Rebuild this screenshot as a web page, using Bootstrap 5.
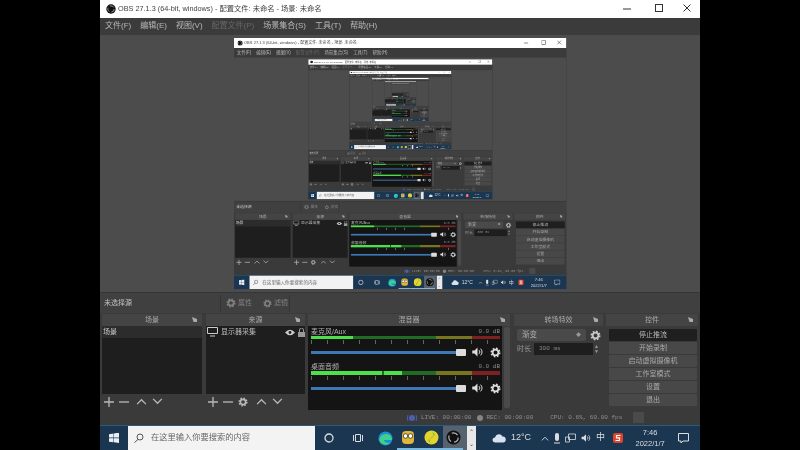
<!DOCTYPE html>
<html lang="zh-CN">
<head>
    <meta charset="UTF-8">
    <meta name="viewport" content="width=device-width, initial-scale=1.0">
    <title>OBS 27.1.3</title>
    <link rel="stylesheet" href="https://cdn.jsdelivr.net/npm/bootstrap@5.3.0/dist/css/bootstrap.min.css">
    <style>
        html, body { height: 450px; overflow: hidden; background: #000; }
        body { font-family: "Liberation Sans", "Noto Sans CJK SC", sans-serif; font-size: 7px; color: #c0c0c0; }
        svg { display: block; flex: none; }
        span { white-space: nowrap; }

        .obs-screen { width: 600px; height: 450px; background: #3a3a3a; filter: blur(.55px); overflow: hidden; }
        .obs-screen .obs-screen { filter: blur(.9px); }

        .win-title { height: 18px; background: #fff; color: #444; font-size: 7.3px; padding-left: 6px; }
        .win-title > svg { margin-right: 2px; }
        .win-btn { width: 32px; display: flex; justify-content: center; }
        .win-btn:last-child { width: 25px; }
        .win-menu { height: 17px; background: #3b3b3b; padding-left: 5px; gap: 9px; font-size: 8px; color: #b8b8b8; }
        .menu-off { color: #666; }

        .obs-canvas { height: 258px; background: #4c4c4c; position: relative; }
        .nest-slot { position: absolute; left: 134px; top: 3px; width: 600px; height: 450px; transform: scale(.554, .558); transform-origin: 0 0; }

        .sel-bar { height: 21px; background: #404040; border-top: 1px solid #353535; }
        .sel-label { width: 120px; padding-left: 4px; }
        .sel-tools { color: #808080; height: 17px; border-left: 1px solid #353535; border-right: 1px solid #353535; padding-left: 5px; width: 70px; gap: 1px; }
        .sel-tools span { margin-right: 10px; margin-left: 1px; }

        .dock-row { height: 96px; padding-left: 2px; margin-top: 1px; }
        .dock-scene { width: 100px; margin-right: 4px; }
        .dock-source { width: 99px; margin-right: 3px; }
        .dock-mixer { width: 202px; margin-right: 4px; }
        .dock-trans { width: 89px; margin-right: 3px; }
        .dock-ctrl { width: 92px; }
        .dock-head { height: 12px; background: #444; color: #aaa; text-align: center; position: relative; line-height: 12px; }
        .dock-head::after { content: ""; position: absolute; right: 5px; top: 3px; width: 5px; height: 5px; background: #aaa; clip-path: polygon(0 0, 100% 40%, 100% 100%, 30% 100%); }
        .dock-list { height: 68px; background: #1e1e1e; }
        .list-sel { height: 12px; line-height: 12px; background: #2c2c2c; padding-left: 1px; color: #ccc; }
        .source-row { height: 12px; padding-left: 1px; color: #bbb; gap: 3px; }
        .source-row span { width: 65px; }
        .dock-tools { height: 15px; background: #3a3a3a; padding-left: 2px; color: #b8b8b8; gap: 5px; }
        .tool-up { margin-left: 2px; }
        .source-up { margin-left: 3px; }

        .mixer-body { height: 84px; }
        .mixer-tracks { width: 194px; background: #141414; padding-left: 3px; }
        .mix-track { height: 35px; padding-top: 1px; }
        .mix-label { height: 9px; line-height: 9px; color: #b0b0b0; width: 189px; }
        .mix-db { font-family: "Liberation Mono", monospace; font-size: 6px; color: #8a8a8a; }
        .meter { height: 3px; width: 189px; position: relative; background: linear-gradient(90deg, #226b26 0 66%, #76761f 66% 85%, #7c2020 85%); }
        .meter-tall { height: 4px; }
        .meter-on { position: absolute; left: 0; top: 0; bottom: 0; background: #4ee04a; }
        .on-mic { width: 22%; }
        .on-desk { width: 48%; background: linear-gradient(90deg, #4ee04a 0 78%, #226b26 78% 80%, #4ee04a 80%); }
        .meter-ticks { height: 4px; width: 189px; margin-top: 1px; background: repeating-linear-gradient(90deg, #666 0 1px, transparent 1px 16px); }
        .mix-ctrl { height: 10px; margin-top: 3px; color: #ddd; width: 190px; }
        .fader { width: 155px; height: 3px; background: #3f77b5; position: relative; margin-right: 5px; }
        .fader::after { content: ""; position: absolute; right: 0; top: -2px; width: 10px; height: 7px; background: #dcdcdc; border-radius: 1px; }
        .mix-gear { margin-left: 6px; }
        .mix-scroll { width: 6px; height: 81px; background: #4a4a4a; border-radius: 2px; margin: 1px 0 0 2px; }

        .trans-body { padding: 3px 0 0 3px; height: 84px; color: #999; }
        .trans-select { width: 69px; height: 12px; background: #4a4a4a; color: #aaa; padding: 0 5px; border-radius: 2px; font-size: 7.5px; }
        .trans-gear { color: #c8c8c8; margin-left: 4px; }
        .trans-time { margin-top: 2px; }
        .trans-input { width: 59px; height: 12px; line-height: 12px; background: #1e1e1e; color: #8a8a8a; padding-left: 5px; margin: 0 1px 0 3px; font-family: "Liberation Mono", monospace; font-size: 6px; }
        .spin { color: #999; font-size: 5px; line-height: 5.5px; }

        .ctrl-body { padding: 3px 1px 0 3px; height: 84px; gap: 1px; }
        .ctrl-btn { height: 12px; line-height: 12px; padding: 0; border: 0; border-radius: 1px; font-size: 7px; background: #484848; color: #aaa; }
        .ctrl-btn.ctrl-on { background: #1f1f1f; color: #bbb; }

        .obs-status { height: 15px; background: #3a3a3a; padding-left: 307px; font-family: "Liberation Mono", monospace; font-size: 6px; color: #8f8f8f; }
        .status-dot { width: 6px; height: 6px; border-radius: 50%; background: #858585; margin: 0 3px 0 6px; }
        .status-rec { margin-right: 17px; }
        .status-live { margin-left: 4px; }
        .status-box { width: 11px; height: 11px; background: #4a4a4a; margin-left: 11px; }

        .win-taskbar { height: 25px; background: #1b3650; color: #ddd; border-top: 1px solid #2a5a7c; }
        .start-box { width: 28px; flex: none; }
        .search-box { width: 187px; flex: none; background: #f3f3f3; color: #666; font-size: 8.25px; padding-left: 6px; gap: 7px; }
        .task-icons { width: 161px; flex: none; }
        .task-cell { width: 24px; flex: none; }
        .task-cell:nth-child(1) { width: 28px; }
        .task-cell:nth-child(2) { width: 30px; }
        .task-cell:nth-child(4) { width: 22px; }
        .task-cell:nth-child(6) { width: 20px; }
        .task-active { background: #56626e; border-bottom: 2px solid #7ab8e0; }
        .task-under { border-bottom: 2px solid #7ab8e0; }
        .task-scroll { width: 13px; flex: none; background: linear-gradient(90deg, #56626e 0 4px, #e8e8e8 4px); color: #444; font-size: 6px; line-height: 12px; text-align: right; padding-right: 2px; }
        .tray { gap: 5px; padding-left: 16px; font-size: 9px; }
        .tray-temp { margin-right: 5px; }
        .tray-ime { margin-left: 3px; }
        .tray-clock { font-size: 7.5px; text-align: center; line-height: 11px; width: 34px; flex: none; margin-left: 5px; }
        .tray-note { margin-left: 6px; }
    </style>
</head>
<body class="d-flex justify-content-center">
    <svg width="0" height="0" class="position-absolute">
        <symbol id="i-gear" viewBox="0 0 16 16">
            <circle cx="8" cy="8" r="4.2" fill="none" stroke="currentColor" stroke-width="2.6"/>
            <circle cx="8" cy="8" r="6" fill="none" stroke="currentColor" stroke-width="2.6" stroke-dasharray="2.4 2.31"/>
        </symbol>
        <symbol id="i-speaker" viewBox="0 0 16 16">
            <path d="M1 6h3l4-4v12l-4-4H1z" fill="currentColor"/>
            <path d="M10 5.5a3.5 3.5 0 0 1 0 5M12 3.5a6 6 0 0 1 0 9" fill="none" stroke="currentColor" stroke-width="1.3"/>
        </symbol>
        <symbol id="i-up" viewBox="0 0 12 8"><path d="M1 7l5-5 5 5" fill="none" stroke="currentColor" stroke-width="1.5"/></symbol>
        <symbol id="i-down" viewBox="0 0 12 8"><path d="M1 1l5 5 5-5" fill="none" stroke="currentColor" stroke-width="1.5"/></symbol>
        <symbol id="i-plus" viewBox="0 0 10 10"><path d="M5 0v10M0 5h10" stroke="currentColor" stroke-width="1.3"/></symbol>
        <symbol id="i-minus" viewBox="0 0 10 10"><path d="M0 5h10" stroke="currentColor" stroke-width="1.3"/></symbol>
        <symbol id="i-obs" viewBox="0 0 16 16">
            <circle cx="8" cy="8" r="7.5" fill="#111"/>
            <circle cx="8" cy="8" r="5" fill="none" stroke="#bbb" stroke-width="1.2" stroke-dasharray="7 3.5"/>
        </symbol>
    </svg>

    <div class="obs-screen d-flex flex-column" id="screen">
        <div class="win-title d-flex align-items-center">
            <svg width="10" height="10"><use href="#i-obs"/></svg>
            <span class="flex-grow-1">OBS 27.1.3 (64-bit, windows) - 配置文件: 未命名 - 场景: 未命名</span>
            <div class="d-flex align-items-center">
                <div class="win-btn"><svg width="9" height="9"><path d="M0 5h8" stroke="#333"/></svg></div>
                <div class="win-btn"><svg width="9" height="9"><rect x=".5" y=".5" width="7" height="7" fill="none" stroke="#333"/></svg></div>
                <div class="win-btn"><svg width="9" height="9"><path d="M.5.5l7 7M7.5.5l-7 7" stroke="#333"/></svg></div>
            </div>
        </div>
        <div class="win-menu d-flex align-items-center">
            <span>文件(F)</span><span>编辑(E)</span><span>视图(V)</span><span class="menu-off">配置文件(P)</span><span>场景集合(S)</span><span>工具(T)</span><span>帮助(H)</span>
        </div>

        <div class="obs-canvas"><div class="nest-slot"></div></div>

        <div class="sel-bar d-flex align-items-center">
            <div class="sel-label"><span>未选择源</span></div>
            <div class="sel-tools d-flex align-items-center">
                <svg width="10" height="10"><use href="#i-gear"/></svg><span>属性</span>
                <svg width="9" height="9"><use href="#i-gear"/></svg><span>滤镜</span>
            </div>
        </div>

        <div class="dock-row d-flex">
            <div class="dock-scene">
                <div class="dock-head">场景</div>
                <div class="dock-list"><div class="list-sel">场景</div></div>
                <div class="dock-tools d-flex align-items-center">
                    <svg width="10" height="10"><use href="#i-plus"/></svg>
                    <svg width="10" height="10"><use href="#i-minus"/></svg>
                    <svg class="tool-up" width="11" height="7"><use href="#i-up"/></svg>
                    <svg width="11" height="7"><use href="#i-down"/></svg>
                </div>
            </div>
            <div class="dock-source">
                <div class="dock-head">来源</div>
                <div class="dock-list">
                    <div class="source-row d-flex align-items-center">
                        <svg width="11" height="10" viewBox="0 0 11 10"><path d="M.5.5h10v6H.5zM3 9h5" fill="none" stroke="#ccc"/></svg>
                        <span>显示器采集</span>
                        <svg width="10" height="7" viewBox="0 0 10 7"><path d="M0 3.5Q5-2 10 3.5 5 9 0 3.5z" fill="#ccc"/><circle cx="5" cy="3.5" r="1.4" fill="#1e1e1e"/></svg>
                        <svg width="7" height="9" viewBox="0 0 7 9"><path d="M0 4h7v5H0z" fill="#999"/><path d="M1.5 4V2a2 2 0 0 1 4 0v2" fill="none" stroke="#999"/></svg>
                    </div>
                </div>
                <div class="dock-tools d-flex align-items-center">
                    <svg width="10" height="10"><use href="#i-plus"/></svg>
                    <svg width="10" height="10"><use href="#i-minus"/></svg>
                    <svg width="10" height="10"><use href="#i-gear"/></svg>
                    <svg class="source-up" width="11" height="7"><use href="#i-up"/></svg>
                    <svg width="11" height="7"><use href="#i-down"/></svg>
                </div>
            </div>
            <div class="dock-mixer">
                <div class="dock-head">混音器</div>
                <div class="mixer-body d-flex">
                    <div class="mixer-tracks">
                        <div class="mix-track">
                            <div class="mix-label d-flex justify-content-between"><span>麦克风/Aux</span><span class="mix-db">0.0 dB</span></div>
                            <div class="meter"><div class="meter-on on-mic"></div></div>
                            <div class="meter-ticks"></div>
                            <div class="mix-ctrl d-flex align-items-center">
                                <div class="fader"></div>
                                <svg width="13" height="12"><use href="#i-speaker"/></svg>
                                <svg class="mix-gear" width="11" height="11"><use href="#i-gear"/></svg>
                            </div>
                        </div>
                        <div class="mix-track">
                            <div class="mix-label d-flex justify-content-between"><span>桌面音频</span><span class="mix-db">0.0 dB</span></div>
                            <div class="meter meter-tall"><div class="meter-on on-desk"></div></div>
                            <div class="meter-ticks"></div>
                            <div class="mix-ctrl d-flex align-items-center">
                                <div class="fader"></div>
                                <svg width="13" height="12"><use href="#i-speaker"/></svg>
                                <svg class="mix-gear" width="11" height="11"><use href="#i-gear"/></svg>
                            </div>
                        </div>
                    </div>
                    <div class="mix-scroll"></div>
                </div>
            </div>
            <div class="dock-trans">
                <div class="dock-head">转场特效</div>
                <div class="trans-body">
                    <div class="d-flex align-items-center">
                        <div class="trans-select d-flex align-items-center justify-content-between"><span>渐变</span><span class="spin">◆</span></div>
                        <svg class="trans-gear" width="11" height="11"><use href="#i-gear"/></svg>
                    </div>
                    <div class="trans-time d-flex align-items-center">
                        <span>时长</span>
                        <div class="trans-input">300 ms</div>
                        <div class="spin"><div>▲</div><div>▼</div></div>
                    </div>
                </div>
            </div>
            <div class="dock-ctrl">
                <div class="dock-head">控件</div>
                <div class="ctrl-body d-flex flex-column">
                    <button class="btn ctrl-btn ctrl-on">停止推流</button>
                    <button class="btn ctrl-btn">开始录制</button>
                    <button class="btn ctrl-btn">启动虚拟摄像机</button>
                    <button class="btn ctrl-btn">工作室模式</button>
                    <button class="btn ctrl-btn">设置</button>
                    <button class="btn ctrl-btn">退出</button>
                </div>
            </div>
        </div>

        <div class="obs-status d-flex align-items-center">
            <svg width="10" height="8" viewBox="0 0 10 8"><circle cx="5" cy="4" r="3" fill="#4a5fb0"/><path d="M1 1Q-.5 4 1 7M9 1q1.5 3 0 6" fill="none" stroke="#4a5fb0"/></svg>
            <span class="status-live">LIVE: 00:00:00</span>
            <div class="status-dot"></div>
            <span class="status-rec">REC: 00:00:00</span>
            <span>CPU: 0.6%, 60.00 fps</span>
            <div class="status-box"></div>
        </div>

        <div class="win-taskbar d-flex flex-grow-1">
            <div class="start-box d-flex align-items-center justify-content-center">
                <svg width="10" height="10" viewBox="0 0 10 10"><path d="M0 1.2l4.500-.7v4H0zM5 .4l5-.8v5H5zM0 5.3h4.500v4L0 8.700zM5 5.300h5V10l-5-.7z" fill="#e8eef4"/></svg>
            </div>
            <div class="search-box d-flex align-items-center">
                <svg width="10" height="10" viewBox="0 0 10 10"><circle cx="6" cy="4" r="3" fill="none" stroke="#555"/><path d="M4 6.500L.5 9.500" stroke="#555"/></svg>
                <span>在这里输入你要搜索的内容</span>
            </div>
            <div class="task-icons d-flex">
                <div class="task-cell d-flex align-items-center justify-content-center"><svg width="10" height="10"><circle cx="5" cy="5" r="4" fill="none" stroke="#ddd" stroke-width="1.3"/></svg></div>
                <div class="task-cell d-flex align-items-center justify-content-center"><svg width="11" height="10"><path d="M2.500 1.500h5v7h-5zM.5 2v6M9.500 2v6" fill="none" stroke="#ddd"/></svg></div>
                <div class="task-cell d-flex align-items-center justify-content-center"><svg width="15" height="15" viewBox="0 0 15 15"><circle cx="7.5" cy="7.5" r="7" fill="#1c8fd8"/><path d="M1 9Q3 2 9 3q5 1 5 6H6q0 3 6 3-4 3-7 1-3-1-4-4z" fill="#3fd08a"/></svg></div>
                <div class="task-cell task-under d-flex align-items-center justify-content-center"><svg width="14" height="15" viewBox="0 0 14 15"><rect x="1" y="1" width="12" height="13" rx="4" fill="#e2b437"/><circle cx="4.5" cy="6" r="2.3" fill="#fff" stroke="#553"/><circle cx="9.5" cy="6" r="2.3" fill="#fff" stroke="#553"/></svg></div>
                <div class="task-cell task-under d-flex align-items-center justify-content-center"><svg width="15" height="15" viewBox="0 0 15 15"><circle cx="7.5" cy="7.5" r="7" fill="#e4d32c"/><path d="M8 2Q12 6 7 8T7 13Q3 9 8 7T8 2z" fill="#2ba84a"/></svg></div>
                <div class="task-cell task-active d-flex align-items-center justify-content-center"><svg width="15" height="15"><use href="#i-obs"/></svg></div>
                <div class="task-scroll d-flex flex-column justify-content-between"><span>⌃</span><span>⌄</span></div>
            </div>
            <div class="tray d-flex align-items-center flex-grow-1">
                <svg width="14" height="10" viewBox="0 0 14 10"><path d="M3 9.500a2.500 2.500 0 0 1 0-5 4 4 0 0 1 7.500-1A3 3 0 0 1 11 9.500z" fill="#d6e2ee"/></svg>
                <span class="tray-temp">12°C</span>
                <svg width="8" height="5"><use href="#i-up"/></svg>
                <svg width="6" height="11" viewBox="0 0 6 11"><rect x="1" y="0" width="4" height="8" rx="2" fill="#ddd"/><path d="M0 10h6" stroke="#ddd"/></svg>
                <svg width="11" height="10" viewBox="0 0 11 10"><path d="M3.500 1h7v5.500h-7zM.5 4h4v5h-4z" fill="#1b3650" stroke="#ddd" stroke-width=".8"/></svg>
                <svg width="10" height="10"><use href="#i-speaker"/></svg>
                <span>中</span>
                <svg class="tray-ime" width="10" height="10" viewBox="0 0 10 10"><rect width="10" height="10" rx="2" fill="#e0432c"/><path d="M7.500 2.500H3.500v2.300h3v2.700h-4" fill="none" stroke="#fff" stroke-width="1.2"/></svg>
                <div class="tray-clock"><div>7:46</div><div>2022/1/7</div></div>
                <svg class="tray-note" width="11" height="11" viewBox="0 0 11 11"><path d="M.5.500h10v7.500H5L3 10V8H.5z" fill="none" stroke="#ddd"/></svg>
            </div>
        </div>
    </div>

    <script>
        // each level of the preview shows the whole screen again
        const screenEl = document.getElementById('screen');
        const base = screenEl.cloneNode(true);
        base.removeAttribute('id');
        let slot = screenEl.querySelector('.nest-slot');
        for (let i = 0; i < 6; i++) {
            const copy = base.cloneNode(true);
            slot.appendChild(copy);
            slot = copy.querySelector('.nest-slot');
        }
    </script>
    <script src="https://cdn.jsdelivr.net/npm/bootstrap@5.3.0/dist/js/bootstrap.bundle.min.js"></script>
</body>
</html>
